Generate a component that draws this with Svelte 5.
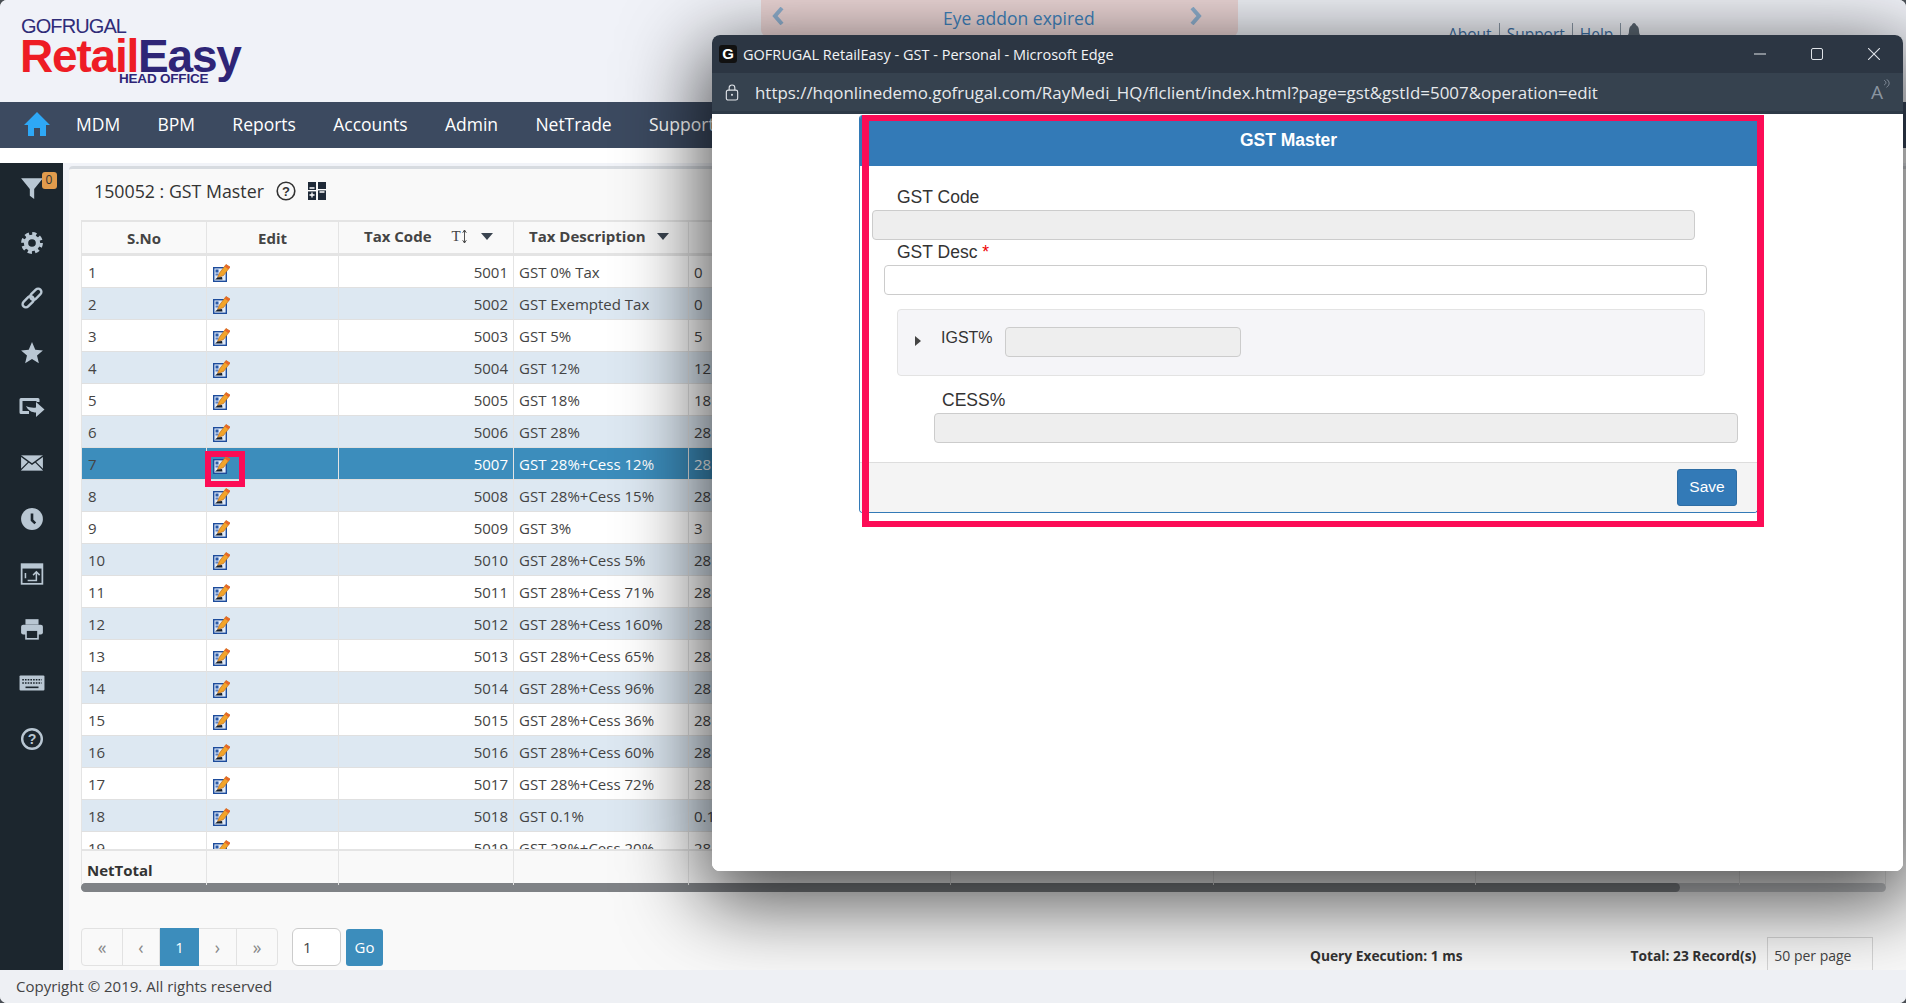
<script>
  const descs = ['GST 0% Tax','GST Exempted Tax','GST 5%','GST 12%','GST 18%','GST 28%','GST 28%+Cess 12%','GST 28%+Cess 15%','GST 3%','GST 28%+Cess 5%','GST 28%+Cess 71%','GST 28%+Cess 160%','GST 28%+Cess 65%','GST 28%+Cess 96%','GST 28%+Cess 36%','GST 28%+Cess 60%','GST 28%+Cess 72%','GST 0.1%','GST 28%+Cess 20%'];
  const rates = ['0','0','5','12','18','28','28','28','3','28','28','28','28','28','28','28','28','0.1','28'];
  const rows = descs.map((d, i) => ({ n: i + 1, code: 5001 + i, desc: d, rate: rates[i] }));
  const navItems = ['MDM','BPM','Reports','Accounts','Admin','NetTrade','Support'];
  const pages = ['«','‹','1','›','»'];
</script>

<div class="root">
  <header class="top">
    <div class="logo">
      <div class="logo-go"><span class="g">G</span>OFRUGAL</div>
      <div class="logo-main"><span class="red">Retail</span><span class="navy">Easy</span></div>
      <div class="logo-ho">HEAD OFFICE</div>
    </div>
    <div class="alert">
      <svg class="chev" viewBox="0 0 12 18"><path d="M10 1 3 9l7 8" fill="none" stroke="#8fb0cf" stroke-width="4"/></svg>
      <span class="alert-t">Eye addon expired</span>
      <svg class="chev chev2" viewBox="0 0 12 18"><path d="M2 1l7 8-7 8" fill="none" stroke="#8fb0cf" stroke-width="4"/></svg>
    </div>
    <div class="links">
      <span>About</span><span class="bar"></span><span>Support</span><span class="bar"></span><span>Help</span><span class="bar"></span>
      <svg class="bell" viewBox="0 0 16 18"><path d="M8 0c1 0 2 1 2 2 2 1 3 3 3 6 0 3 1 4 2 5v1H1v-1c1-1 2-2 2-5 0-3 1-5 3-6 0-1 1-2 2-2z" fill="#5a6672"/></svg>
    </div>
  </header>

  <nav class="nav">
    <svg class="home" viewBox="0 0 26 24"><path d="M13 0 26 13h-4v11h-6v-8h-6v8H4V13H0z" fill="#2ea8f6"/></svg>
    {#each navItems as item}<span class="nav-item">{item}</span>{/each}
  </nav>

  <div class="strip"></div>

  <div class="body">
    <aside class="side">
      <div class="side-i filter">
        <svg viewBox="0 0 22 22"><path d="M1 2h20l-8 10v9l-4-3v-6z" fill="#b9c7d3"/></svg>
        <span class="badge">0</span>
      </div>
      <div class="side-i"><svg viewBox="0 0 22 22"><circle cx="11" cy="11" r="5.500" fill="none" stroke="#b9c7d3" stroke-width="4"/><circle cx="11" cy="11" r="8.500" fill="none" stroke="#b9c7d3" stroke-width="3" stroke-dasharray="3.800 2.870"/></svg></div>
      <div class="side-i"><svg viewBox="0 0 22 22"><g fill="none" stroke="#b9c7d3" stroke-width="2.200"><rect x="11.500" y="1.500" width="6" height="12" rx="3" transform="rotate(45 14.500 7.500)"/><rect x="4.500" y="8.500" width="6" height="12" rx="3" transform="rotate(45 7.500 14.500)"/></g></svg></div>
      <div class="side-i"><svg viewBox="0 0 22 22"><path d="m11 1 3 7 7 .6-5.400 4.700 1.700 7.200L11 16.600 4.700 20.500l1.700-7.200L1 8.600 8 8z" fill="#b9c7d3"/></svg></div>
      <div class="side-i wide"><svg viewBox="0 0 26 22"><path d="M19 6V3.500H2v13h8" fill="none" stroke="#b9c7d3" stroke-width="3" stroke-linejoin="round"/><path d="M17 6l8.500 7.500L17 21v-4.500c-4 0-8-2-10-6.500 3 1.500 7 2 10 1.500z" fill="#b9c7d3"/></svg></div>
      <div class="side-i"><svg viewBox="0 0 22 22"><rect x="1" y="4" width="20" height="14" fill="#b9c7d3"/><path d="M0 4l11 8 11-8M0 18l8-8M22 18l-8-8" fill="none" stroke="#1c262e" stroke-width="1.200"/></svg></div>
      <div class="side-i"><svg viewBox="0 0 22 22"><circle cx="11" cy="11" r="10" fill="#b9c7d3"/><path d="M11 6v6l3 3" fill="none" stroke="#1c262e" stroke-width="2.400"/></svg></div>
      <div class="side-i"><svg viewBox="0 0 22 22"><rect x="1.500" y="2" width="19" height="18" fill="#1c262e" stroke="#b9c7d3" stroke-width="1.600"/><rect x="1.500" y="2" width="19" height="4" fill="#b9c7d3"/><path d="M7 17h8v-7M12 12l3-3 3 3M5 10v5" fill="none" stroke="#b9c7d3" stroke-width="1.400"/></svg></div>
      <div class="side-i"><svg viewBox="0 0 22 22"><rect x="5" y="2" width="12" height="5" fill="#b9c7d3"/><rect x="1" y="7" width="20" height="9" rx="2" fill="#b9c7d3"/><rect x="5.500" y="12" width="11" height="8" fill="#1c262e" stroke="#b9c7d3" stroke-width="1.500"/></svg></div>
      <div class="side-i wide"><svg viewBox="0 0 24 18"><rect x="0.500" y="2" width="23" height="14" rx="1" fill="#b9c7d3"/><path d="M3 6h18M3 9h18" stroke="#1c262e" stroke-width="1.500" stroke-dasharray="1.500 1"/><path d="M6 13h12" stroke="#1c262e" stroke-width="1.500"/></svg></div>
      <div class="side-i"><svg viewBox="0 0 22 22"><circle cx="11" cy="11" r="9" fill="none" stroke="#b9c7d3" stroke-width="2.200"/><text x="11" y="15.500" text-anchor="middle" class="q">?</text></svg></div>
    </aside>

    <main class="main">
      <section class="panel">
        <div class="title-row">
          <span class="title">150052 : GST Master</span>
          <svg class="t-help" viewBox="0 0 20 20"><circle cx="10" cy="10" r="8.800" fill="none" stroke="#333" stroke-width="1.600"/><text x="10" y="14.500" text-anchor="middle" class="q2">?</text></svg>
          <svg class="t-grid" viewBox="0 0 18 18"><rect width="8" height="18" fill="#1f2a38"/><rect x="10" width="8" height="18" fill="#1f2a38"/><path d="M1.500 6h5M11.500 10h5M1.500 13h5M4 10.500v5" stroke="#fff" stroke-width="1.300"/><rect x="0" y="8" width="8" height="1.400" fill="#fff"/><rect x="10" y="7" width="8" height="1.400" fill="#fff"/></svg>
        </div>

        <div class="table">
          <div class="thead grid">
            <div class="th c">S.No</div>
            <div class="th c">Edit</div>
            <div class="th code-h">
              <span>Tax Code</span>
              <span class="sort">T<svg viewBox="0 0 5 14"><path d="M2.500 0v14M.5 3l2-3 2 3M.5 11l2 3 2-3" fill="none" stroke="#444" stroke-width="1"/></svg></span>
              <i class="caret"></i>
            </div>
            <div class="th desc-h"><span>Tax Description</span><i class="caret"></i></div>
            <div class="th"></div><div class="th"></div><div class="th"></div><div class="th"></div><div class="th"></div>
          </div>
          <div class="tbody">
            {#each rows as r}
              <div class="row grid" class:alt={r.n % 2 === 0} class:sel={r.n === 7}>
                <div class="td sno">{r.n}</div>
                <div class="td edit">
                  <svg viewBox="0 0 17 18">
                    <rect x="0.700" y="3.700" width="12.600" height="13.600" fill="#dfe9f7" stroke="#1d4c9c" stroke-width="1.400"/>
                    <rect x="2.500" y="5.500" width="3" height="3" fill="#2a5aa8"/>
                    <rect x="2.500" y="9.500" width="3" height="2" fill="#5b7fbe"/>
                    <path d="M4.500 13.500 6.500 9l6.500-8.500L17 3 10.500 11.500z" fill="#f2a42a" stroke="#c0701c" stroke-width=".7"/>
                    <path d="M13 .5 17 3l-1.500 2.200-3.800-2.800z" fill="#e8662a"/>
                    <path d="M2 15.500l2.500-2 4.500-.5.500 2.500z" fill="#17202c"/>
                  </svg>
                </div>
                <div class="td num">{r.code}</div>
                <div class="td txt">{r.desc}</div>
                <div class="td txt">{r.rate}</div>
                <div class="td"></div><div class="td"></div><div class="td"></div><div class="td"></div>
              </div>
            {/each}
          </div>
          <div class="tfoot grid">
            <div class="tf strong">NetTotal</div>
            <div class="tf"></div><div class="tf"></div><div class="tf"></div><div class="tf"></div><div class="tf"></div><div class="tf"></div><div class="tf"></div><div class="tf"></div>
          </div>
          <div class="scroll"><div class="thumb"></div></div>
        </div>

        <div class="pager-row">
          <div class="pager">
            {#each pages as p, i}
              <span class="pg" class:active={i === 2} style="width:{[41,37,39,38,40][i]}px">{p}</span>
            {/each}
          </div>
          <div class="jump">1</div>
          <div class="go">Go</div>
          <div class="qe">Query Execution: 1 ms</div>
          <div class="total">Total: 23 Record(s)</div>
          <div class="perpage">50 per page</div>
        </div>
      </section>
    </main>
  </div>

  <footer class="foot">Copyright © 2019. All rights reserved</footer>

  <div class="mark-small"></div>

  <div class="win">
    <div class="win-title">
      <span class="favicon">G</span>
      <span class="win-name">GOFRUGAL RetailEasy - GST - Personal - Microsoft Edge</span>
      <div class="win-ctl">
        <svg viewBox="0 0 12 12"><path d="M0 6h12" stroke="#dfe3e8" stroke-width="1.100"/></svg>
        <svg viewBox="0 0 12 12"><rect x=".5" y=".5" width="11" height="11" rx="1.500" fill="none" stroke="#dfe3e8"/></svg>
        <svg viewBox="0 0 12 12"><path d="M0 0l12 12M12 0 0 12" stroke="#dfe3e8" stroke-width="1.100"/></svg>
      </div>
    </div>
    <div class="win-addr">
      <svg class="lock" viewBox="0 0 14 18"><rect x="1" y="6.500" width="12" height="10.500" rx="2" fill="none" stroke="#dfe3e8" stroke-width="1.200"/><path d="M4 6.500V4a3 3 0 0 1 6 0v2.500" fill="none" stroke="#dfe3e8" stroke-width="1.200"/><circle cx="7" cy="11.500" r="1.100" fill="#dfe3e8"/></svg>
      <span class="url">https://hqonlinedemo.gofrugal.com/RayMedi_HQ/flclient/index.html?page=gst&amp;gstId=5007&amp;operation=edit</span>
      <span class="aloud">A<svg viewBox="0 0 6 10"><path d="M1 1c2 1 2 3 0 4M3 0c3 2 3 5 0 7" fill="none" stroke="#8a95a1" stroke-width=".8"/></svg></span>
    </div>
    <div class="win-body">
      <div class="form">
        <div class="form-head">GST Master</div>
        <div class="form-body">
          <label class="lb l1">GST Code</label>
          <div class="inp dis f1"></div>
          <label class="lb l2">GST Desc <b>*</b></label>
          <div class="inp f2"></div>
          <div class="igst">
            <i class="tri"></i>
            <span class="igst-l">IGST%</span>
            <div class="inp dis f3"></div>
          </div>
          <label class="lb l3">CESS%</label>
          <div class="inp dis f4"></div>
        </div>
        <div class="form-foot"><span class="save">Save</span></div>
      </div>
      <div class="mark-big"></div>
    </div>
  </div>
</div>

<style>
  :global(body) { margin: 0; background: #4a4f55; }
  .root {
    width: 1906px; height: 1003px; position: relative; overflow: hidden;
    display: flex; flex-direction: column; background: #fff; border-radius: 7px;
    font-family: "Open Sans", sans-serif; color: #444;
  }
  .top { height: 102px; background: #f0f2f8; display: flex; position: relative; flex: none; }
  .logo { margin: 18px 0 0 20px; width: 241px; font-family: "Liberation Sans", sans-serif; }
  .logo-go { font-size: 20px; line-height: 17px; letter-spacing: -.9px; color: #2f2c78; margin-left: 1px; }
  .logo-main { font-size: 46px; line-height: 38px; font-weight: 700; letter-spacing: -1.200px; margin-top: 2px; white-space: nowrap; }
  .red { color: #ee1c25; }
  .navy { color: #2e2577; }
  .logo-ho { font-size: 13.500px; line-height: 13px; font-weight: 700; color: #2e2577; margin: -3px 0 0 99px; letter-spacing: -.2px; white-space: nowrap; }
  .alert {
    margin-left: 500px; width: 477px; height: 36px; background: #edd7d7; border-radius: 0 0 6px 6px;
    display: flex; align-items: center; padding-left: 11px; box-sizing: border-box;
    color: #3f83bd; font-size: 17.500px;
  }
  .chev { width: 12px; height: 18px; margin-bottom: 4px; flex: none; }
  .alert-t { margin: 0 0 1px 159px; width: 151px; white-space: nowrap; }
  .chev2 { margin-left: 96px; }
  .links {
    margin-left: 210px; padding-top: 23px; display: flex; gap: 7px; align-items: flex-start;
    color: #3b6fa5; font-size: 15.500px; white-space: nowrap;
  }
  .bar { width: 1px; height: 18px; background: #8a97a5; }
  .bell { width: 16px; height: 18px; margin-left: -2px; }

  .nav { height: 46px; flex: none; background: #3c4a60; display: flex; align-items: center; position: relative; color: #fff; font-size: 17.500px; padding: 0 0 2px 24px; box-sizing: border-box; }
  .home { width: 26px; height: 24px; margin-right: 26px; }
  .nav-item { margin-right: 37.300px; white-space: nowrap; }
  .strip { height: 15px; flex: none; background: #fff; }

  .body { height: 807px; flex: none; display: flex; }
  .side { width: 63px; flex: none; background: #1c262e; display: flex; flex-direction: column; align-items: center; padding-top: 13px; box-sizing: border-box; }
  .side-i { height: 55.100px; width: 24px; display: flex; align-items: flex-start; justify-content: center; position: relative; flex: none; }
  .side-i svg { width: 24px; height: 24px; flex: none; }
  .side-i.wide svg { width: 26px; margin-top: -1px; }
  .badge { position: absolute; left: 22px; top: -4px; width: 15px; height: 17px; background: #e19b4c; border-radius: 3px; color: #333; font-size: 12px; line-height: 16px; text-align: center; }
  .q { font-family: "Liberation Sans", sans-serif; font-weight: 700; font-size: 13px; fill: #b9c7d3; }
  .q2 { font-family: "Liberation Sans", sans-serif; font-weight: 700; font-size: 13px; fill: #333; }

  .main { flex: 1; min-width: 0; background: #f1f3f8; padding: 3px 0 0 6px; }
  .panel { height: 804px; background: #f9f9f9; border-top: 3px solid #d7dbe0; border-radius: 4px 0 0 0; box-sizing: border-box; overflow: hidden; padding-left: 12px; }

  .title-row { height: 51px; box-sizing: border-box; display: flex; align-items: center; padding: 0 0 8px 13px; }
  .title { font-size: 17.800px; color: #333; width: 182px; white-space: nowrap; }
  .t-help { width: 20px; height: 20px; margin-right: 12px; }
  .t-grid { width: 18px; height: 18px; }

  .table { width: 1805px; }
  .grid { display: grid; grid-template-columns: 126px 132px 175px 175px 262px 263px 262px 264px 146px; }
  .thead { height: 36px; border-top: 2px solid #e4e4e4; border-bottom: 3px solid #e4e4e4; box-sizing: border-box; }
  .th { font-size: 15px; font-weight: 700; border-right: 1px solid #e4e4e4; display: flex; align-items: center; color: #444; white-space: nowrap; }
  .th:first-child { border-left: 1px solid #e4e4e4; }
  .th.c { justify-content: center; }
  .code-h { padding-left: 25px; padding-bottom: 3px; }
  .desc-h { padding-left: 15px; padding-bottom: 3px; }
  .sort { margin-left: 20px; font-weight: 400; font-family: "Liberation Serif", serif; font-size: 15px; display: flex; align-items: center; }
  .sort svg { width: 5px; height: 13px; margin-left: 1px; }
  .caret { width: 0; height: 0; border: 6px solid transparent; border-top: 7px solid #3a4450; border-bottom: 0; margin-left: 14px; }
  .desc-h .caret { margin-left: 11px; }

  .tbody { height: 593px; overflow: hidden; }
  .row { height: 32px; background: #fff; box-sizing: border-box; }
  .row.alt { background: #dde8f2; }
  .row.sel { background: #3c8dbc; color: #fff; }
  .td { font-size: 15px; line-height: 33px; border-right: 1px solid #e4e4e4; border-bottom: 1px solid #e0e0e0; box-sizing: border-box; height: 32px; padding: 0 5px; white-space: nowrap; overflow: hidden; }
  .td:first-child { border-left: 1px solid #e4e4e4; }
  .sno { padding-left: 6px; }
  .row.sel .sno { color: #444; }
  .num { text-align: right; }
  .edit { padding: 8px 0 0 6px; }
  .edit svg { display: block; width: 17px; height: 18px; }

  .tfoot { height: 34px; border-top: 2px solid #e4e4e4; box-sizing: border-box; }
  .tf { border-right: 1px solid #e4e4e4; font-size: 15px; }
  .tf:first-child { border-left: 1px solid #e4e4e4; }
  .strong { font-weight: 700; padding-left: 5px; line-height: 30px; color: #333; padding-top: 4px; }
  .scroll { height: 9px; background: #c5c7ca; border-radius: 5px; }
  .thumb { width: 1599px; height: 9px; background: #7f8286; border-radius: 5px; }

  .pager-row { display: flex; align-items: flex-start; margin-top: 36px; position: relative; }
  .pager { display: flex; height: 38px; box-sizing: border-box; border: 1px solid #e2e2e2; border-radius: 4px; background: #f9f9f9; }
  .pg { display: flex; align-items: center; justify-content: center; font-size: 17.500px; color: #888; border-right: 1px solid #e2e2e2; margin-top: -1px; height: 38px; box-sizing: border-box; }
  .pg:last-child { border-right: 0; }
  .pg.active { background: #3c8dbc; color: #fff; border-right: 0; font-size: 15px; }
  .jump { margin-left: 14px; width: 49px; height: 38px; box-sizing: border-box; border: 1px solid #ccc; border-radius: 6px; background: #fff; font-size: 15px; line-height: 36px; padding-left: 10px; }
  .go { margin: 1px 0 0 5px; width: 37px; height: 37px; border-radius: 3px; background: #3c8dbc; color: #fff; font-size: 15px; line-height: 37px; text-align: center; }
  .qe { margin: 18px 0 0 927px; font-size: 13.750px; font-weight: 700; color: #333; white-space: nowrap; }
  .total { margin: 18px 0 0 168px; font-size: 13.750px; font-weight: 700; color: #333; white-space: nowrap; }
  .perpage { margin: 9px 0 0 11px; width: 106px; height: 40px; border: 1px solid #d5d5d5; box-sizing: border-box; font-size: 14px; padding: 8px 0 0 6px; white-space: nowrap; }

  .foot { height: 33px; flex: none; background: #eef0f4; font-size: 15px; padding-left: 16px; line-height: 33px; color: #444; position: relative; z-index: 3; }

  .mark-small { position: absolute; left: 205px; top: 451px; width: 40px; height: 36px; border: 6px solid #fc0c56; box-sizing: border-box; }

  .win {
    position: absolute; left: 712px; top: 35px; width: 1191px; height: 836px; z-index: 2;
    border-radius: 8px; overflow: hidden; background: #fff;
    display: flex; flex-direction: column;
  }
  .root::after { content: ""; position: absolute; left: 712px; top: 35px; width: 1191px; height: 836px; border-radius: 8px; box-shadow: 0 22px 80px 10px rgba(0,0,0,.68); pointer-events: none; z-index: 1; }

  .win-title { height: 38px; flex: none; background: #2c3643; display: flex; align-items: center; color: #f2f4f6; }
  .favicon { width: 18px; height: 18px; margin-left: 7px; border-radius: 3px; background: #111; color: #fff; font: 700 15px/18px "Liberation Sans", sans-serif; text-align: center; }
  .win-name { margin-left: 6px; font-size: 14.500px; white-space: nowrap; }
  .win-ctl { margin-left: auto; display: flex; gap: 45px; padding-right: 23px; }
  .win-ctl svg { width: 12px; height: 12px; }

  .win-addr { height: 38px; flex: none; background: #36424f; display: flex; align-items: center; color: #e6e9ec; border-bottom: 3px solid #2e3a47; box-sizing: content-box; }
  .lock { width: 14px; height: 17px; margin-left: 13px; }
  .url { margin-left: 16px; font-size: 16.900px; white-space: nowrap; }
  .aloud { margin-left: auto; margin-right: 13px; color: #8a95a1; font: 19px "Open Sans", sans-serif; display: flex; align-items: flex-start; }
  .aloud svg { width: 7px; height: 12px; }

  .win-body { flex: 1; position: relative; background: #fff; }
  .form { margin: 1px 0 0 147px; width: 899px; height: 398px; box-sizing: border-box; border: 1px solid #337ab7; border-top: 0; border-radius: 4px; background: #fff; display: flex; flex-direction: column; font-family: "Liberation Sans", sans-serif; color: #333; overflow: hidden; }
  .form-head { height: 51px; flex: none; background: #337ab7; color: #fff; font-weight: 700; font-size: 17.500px; line-height: 50px; text-align: center; padding-right: 40px; }
  .form-body { flex: 1; font-size: 17.500px; }
  .lb { display: block; height: 22px; line-height: 22px; }
  .lb b { color: #e00; font-weight: 400; }
  .l1 { margin: 20px 0 2px 37px; }
  .l2 { margin: 1px 0 2px 37px; }
  .l3 { margin: 13px 0 2px 82px; }
  .inp { height: 30px; border: 1px solid #ccc; border-radius: 4px; box-sizing: border-box; background: #fff; }
  .inp.dis { background: #eee; }
  .f1 { margin-left: 12px; width: 823px; }
  .f2 { margin-left: 24px; width: 823px; }
  .igst { margin: 14px 0 0 37px; width: 808px; height: 67px; border: 1px solid #e3e3e3; border-radius: 4px; background: #f5f5f8; box-sizing: border-box; position: relative; display: flex; }
  .tri { width: 0; height: 0; border: 5px solid transparent; border-left: 6px solid #444; border-right: 0; margin: 26px 0 0 17px; }
  .igst-l { margin: 17px 0 0 20px; width: 63px; line-height: 22px; font-size: 16px; }
  .f3 { margin: 17px 0 0 1px; width: 236px; }
  .f4 { margin-left: 74px; width: 804px; }
  .form-foot { height: 50px; flex: none; background: #f4f4f4; border-top: 1px solid #ddd; box-sizing: border-box; display: flex; justify-content: flex-end; padding: 6px 20px 0 0; }
  .save { width: 60px; height: 37px; background: #337ab7; border: 1px solid #2e6da4; border-radius: 3px; color: #fff; font-size: 15.500px; line-height: 33px; text-align: center; box-sizing: border-box; }

  .mark-big { position: absolute; left: 150px; top: 1px; width: 902px; height: 412px; border: 6px solid #fc0c56; border-width: 6px 7px; box-sizing: border-box; }
</style>
